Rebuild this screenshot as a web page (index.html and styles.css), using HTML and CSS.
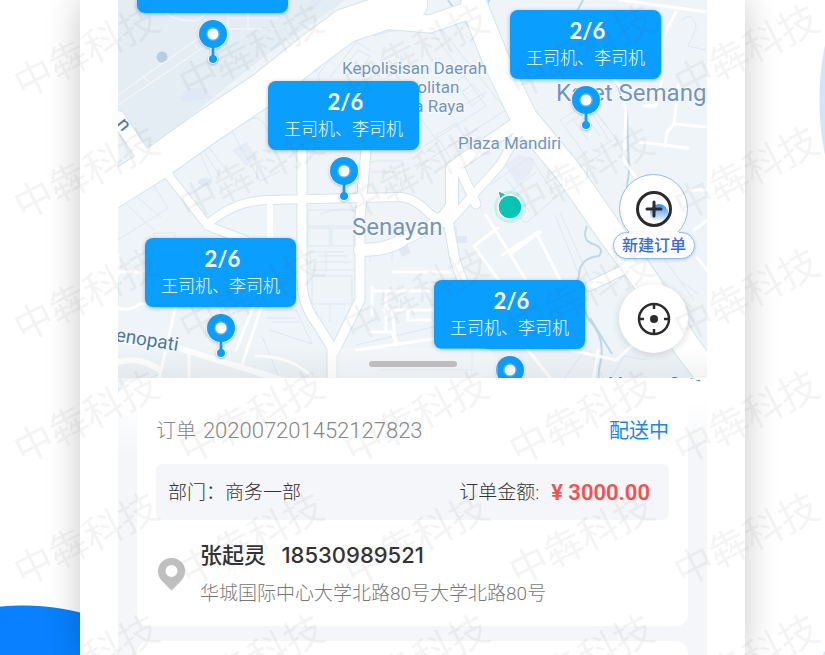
FILE: index.html
```
<!DOCTYPE html>
<html lang="zh-CN">
<head>
    <meta charset="UTF-8">
    <meta name="viewport" content="width=device-width, initial-scale=1.0">
    <title>配送订单</title>
    <link rel="stylesheet" href="styles.css">
</head>
<body>
    <main class="phone">
        <div class="screen">
            <section class="map">
                <svg class="map-bg" viewBox="118 0 589 400" preserveAspectRatio="xMidYMid slice" aria-hidden="true">
                    <rect x="118" width="589" height="400" fill="#eff4f8"/>
                    <path d="M118 0H345L260 60 148 150 118 112z" fill="#e4edf4"/>
                    <g fill="#dfe8f3">
                        <path d="M180 98l8-10h16l8 10-30 4z"/>
                        <circle cx="162" cy="57" r="5.500" fill="#b5cfe1"/>
                        <ellipse cx="205" cy="182" rx="7" ry="4"/>
                        <path d="M450 227h7v9h10v7h-17zM398 248l9-4 4 9-9 4zM306 8l6-8h10l-10 12z"/>
                        <path d="M505 165l14-10 16 4-4 14-14 12zM232 150l14-8 12 16-12 8z" fill="#e7edf6"/>
                    </g>

                    <!-- parcels and footpaths -->
                    <g class="parcels bright">
                        <path d="M118 95L200 37M118 105L207 45M142 75l7 8M192 41l6 8M165 13q10 8 30 8l12-8M228 13v16h50M248 13v16M228 18h50"/>
                    </g>
                    <g class="parcels">
                        <path d="M118 170l18-12-18-25M118 186l14-10-10-12"/>
                        <path d="M170 170l15 28 27-18-14-32zM201 146l20 32M206 143l22 30M230 128l30 53 20-10M248 120q15-8 22 18"/>
                        <path d="M118 240l50-32-14-22M126 204l28 26M137 197l24 20M153 233h22v8h-18z"/>
                        <path d="M315 72l37-42q10-6 20-6l70 6 64 80-70 45-20 14M352 30l-34 45 10 40M362 34l-32 44M374 36q20-10 60-2l52 72-68 44"/>
                        <path d="M350 60l8-10 12 6-8 12zM356 42l14 8M462 92l10-8 12 12-12 10zM458 80l18-12M466 104l20-12M408 130l14-10 16 22-14 12zM436 135l20-12 16 26-20 12z"/>
                        <path d="M278 28l18 24M284 28l16 22M340 0l-10 14-8-6"/>
                        <path d="M560 120l30-18 28 40-28 20zM566 124l24-14 20 32M572 118l16 22M582 112l18 24M592 108l16 20M596 150l20-12"/>
                        <path d="M490 185l40-28 26 40-30 26-22-18M500 200l36-28M506 178l24 34"/>
                        <path d="M308 210h46v16h-46zM308 228h22v18h-22zM332 228h22v18h-22zM310 250v20h44M318 256h30M316 262h36M312 276h40v28h-40zM330 304v18M312 252h32M326 252v20"/>
                        <path d="M320 214q25-10 42 0M370 262v-14h22v14"/>
                        <path d="M266 310h30l16 34M266 318h30M270 330l42 14M272 322h28M262 336l18 44"/>
                        <path d="M362 165l14-4h26l4 20-10 20-30-4zM366 172h34M118 282v28M272 208v30h-20"/>
                        <path d="M555 215l24 60M560 212l30 68M630 258l52 70M640 250l54 72M650 240l44 60M664 302l24 14M672 290l20 18M682 282l16 12"/>
                        <path d="M380 370h92v-22M356 345l120-28M610 380l14-24 22 4M560 384l30-40M120 392l44-20"/>
                        <path d="M682 20q12-10 14 8l-8 18 18 4M610 60l22-10M590 350l14 30"/>
                    </g>

                    <!-- water -->
                    <g class="water">
                        <path d="M583 0l-20 38 52 42 12 32 2 60-4 30M587 226q-6 14 6 18t6 12q-20 2-20 20-6 12 0 22l10 22q16 16 12 40-4 14-2 30"/>
                        <path d="M448 0q6 12 22 16 16-4 20-18M376 22l70 5M590 318l22 36"/>
                    </g>

                    <!-- streets -->
                    <g class="edge">
                        <path class="w34" d="M90 205L155 164 207 127 265 88 310 52 345 26 410 4"/>
                        <path class="w17" d="M345 17L430 24 470 10 480-10"/>
                        <path class="w26" d="M474 5L496 60 524 118 567 170 610 232 643 277 687 347 720 390"/>
                        <path class="w14" d="M118 118L142 154"/>
                        <path class="w8" d="M166 172L208 226 245 240M208 224Q235 200 270 200L400 197Q415 198 430 214L447 224 500 165 520 130"/>
                        <path class="w9" d="M302 150V280Q302 305 318 325L332 348V380M366 150L360 220V300L334 352M448 220L455 260 480 330"/>
                        <path class="w12" d="M360 250Q390 250 405 238L440 222 452 206V168L514 125"/>
                        <path class="w9" d="M458 165L476 204M590 286L640 262"/>
                    </g>
                    <g class="road">
                        <path class="w34" d="M90 205L155 164 207 127 265 88 310 52 345 26 410 4"/>
                        <path class="w17" d="M345 17L430 24 470 10 480-10"/>
                        <path class="w26" d="M474 5L496 60 524 118 567 170 610 232 643 277 687 347 720 390"/>
                        <path class="w14" d="M118 118L142 154"/>
                        <path class="w8" d="M166 172L208 226 245 240M208 224Q235 200 270 200L400 197Q415 198 430 214L447 224 500 165 520 130"/>
                        <path class="w9" d="M302 150V280Q302 305 318 325L332 348V380M366 150L360 220V300L334 352M448 220L455 260 480 330"/>
                        <path class="w12" d="M360 250Q390 250 405 238L440 222 452 206V168L514 125"/>
                        <path class="w9" d="M458 165L476 204M590 286L640 262"/>
                        <path class="w6" d="M118 340L178 348 250 370 330 395M118 362Q140 356 160 370M270 202V240"/>
                        <path class="w3" d="M118 308Q128 312 140 304H150M176 305L160 375V400M189 352V385M262 305L242 365M254 305L236 350M118 272H146M256 356Q290 356 310 375M118 255V275"/>
                        <path class="w3" d="M372 287V315M372 291H430M393 272H450M386 291V330M370 332H392L397 345M384 310H460M408 310V320H430M392 310L396 345M356 350L440 338"/>
                        <path class="w3" d="M486 215L526 280M502 255L538 232M474 246L498 228M474 246L500 282M538 236L560 280M510 254L540 232M520 340L560 390M598 350L590 400M570 350L616 360 634 344"/>
                        <path class="w3" d="M620 0L707 12M676 12L664 35 662 80 656 106 644 106M678 85L674 124M707 127L674 124 667 132 665 146M640 142L688 148M600 60L622 90 626 112 624 160 640 184M690 190H707M694 230L707 220M697 258L707 270"/>
                    </g>

                    <g class="labels">
                        <text x="342" y="74" class="s17">Kepolisisan Daerah</text>
                        <text x="363" y="93" class="s17">Metropolitan</text>
                        <text x="366" y="112" class="s17">Jakarta Raya</text>
                        <text x="458" y="149" class="s17">Plaza Mandiri</text>
                        <text x="352" y="235" class="s24">Senayan</text>
                        <text x="556" y="101" class="s24">Karet Semang</text>
                        <text x="608" y="389" class="s17 dark">Menara Satr</text>
                        <text x="115" y="341" class="s19 dark" transform="rotate(9 115 341)">enopati</text>
                        <text x="116" y="124" class="s19 dark" transform="rotate(52 116 124)">n</text>
                    </g>

                    <!-- own position -->
                    <circle cx="510" cy="207" r="16" fill="#08c6b5" opacity=".15"/>
                    <path d="M498 191l8 3-6 5z" fill="#08c6b5" stroke="#fff"/>
                    <circle cx="510" cy="207" r="12" fill="#08c6b5" stroke="#fff" stroke-width="1.500"/>
                </svg>

                <svg class="symbols" aria-hidden="true">
                    <symbol id="pin" viewBox="0 0 32 46">
                        <path d="M16 30v10" stroke="#fff" stroke-width="5"/>
                        <circle cx="16" cy="41" r="5" fill="#fff"/>
                        <circle cx="16" cy="16" r="15" fill="#fff" opacity=".7"/>
                        <circle cx="16" cy="16" r="14" fill="#0a9eff"/>
                        <path d="M16 28v12" stroke="#0a9eff" stroke-width="3"/>
                        <circle cx="16" cy="41" r="4" fill="#0a9eff"/>
                        <circle cx="16" cy="16" r="7" fill="#5fc2ff" opacity=".6"/>
                        <circle cx="16" cy="16" r="5.500" fill="#fff"/>
                    </symbol>
                </svg>

                <button class="marker marker-a" type="button">
                    <span class="bubble"><b>2/6</b><span>王司机、李司机</span></span>
                    <svg class="pin"><use href="#pin"/></svg>
                </button>
                <button class="marker marker-b" type="button">
                    <span class="bubble"><b>2/6</b><span>王司机、李司机</span></span>
                    <svg class="pin"><use href="#pin"/></svg>
                </button>
                <button class="marker marker-c" type="button">
                    <span class="bubble"><b>2/6</b><span>王司机、李司机</span></span>
                    <svg class="pin"><use href="#pin"/></svg>
                </button>
                <button class="marker marker-d" type="button">
                    <span class="bubble"><b>2/6</b><span>王司机、李司机</span></span>
                    <svg class="pin"><use href="#pin"/></svg>
                </button>
                <button class="marker marker-e" type="button">
                    <span class="bubble"><b>2/6</b><span>王司机、李司机</span></span>
                    <svg class="pin"><use href="#pin"/></svg>
                </button>

                <div class="map-tools">
                    <button class="new-order" type="button">
                        <span class="tool-circle">
                            <svg width="40" height="40" viewBox="0 0 40 40" fill="none" aria-hidden="true">
                                <defs>
                                    <linearGradient id="glow" x1="0" y1="0" x2="0" y2="1">
                                        <stop offset="0" stop-color="#2f86f5"/>
                                        <stop offset="1" stop-color="#fff"/>
                                    </linearGradient>
                                </defs>
                                <circle cx="25" cy="24" r="9" fill="url(#glow)"/>
                                <circle cx="20" cy="20" r="16.500" stroke="#2b2b2e" stroke-width="3"/>
                                <path d="M20 13v14M13 20h14" stroke="#2b2b2e" stroke-width="3" stroke-linecap="round"/>
                            </svg>
                        </span>
                        <span class="tool-label">新建订单</span>
                    </button>
                    <button class="locate tool-circle" type="button" aria-label="定位">
                        <svg width="40" height="40" viewBox="0 0 40 40" fill="none" stroke="#2b2b2e" stroke-width="2.500" aria-hidden="true">
                            <circle cx="20" cy="20" r="15"/>
                            <path d="M20 5v5M20 30v5M5 20h5M30 20h5"/>
                            <circle cx="20" cy="20" r="4" fill="#2b2b2e" stroke="none"/>
                        </svg>
                    </button>
                </div>

                <div class="grip"><span></span></div>
            </section>

            <section class="sheet">
                <article class="order">
                    <header class="order-head">
                        <h2>订单 <span>202007201452127823</span></h2>
                        <span class="state">配送中</span>
                    </header>
                    <div class="summary">
                        <span>部门：商务一部</span>
                        <span class="amount">订单金额: <b>¥ 3000.00</b></span>
                    </div>
                    <div class="receiver">
                        <svg width="27" height="33" viewBox="0 0 27 33" aria-hidden="true">
                            <path d="M13.500 0A13.300 13.300 0 0 0 0 13.300C0 18 2 21 5 24l8.500 8.500L22 24c3-3 5-6 5-10.700A13.300 13.300 0 0 0 13.500 0zm0 7a6 6 0 1 1 0 12 6 6 0 0 1 0-12z" fill="#bfbfbf"/>
                        </svg>
                        <div>
                            <p class="contact">张起灵 <span>18530989521</span></p>
                            <p class="address">华城国际中心大学北路80号大学北路80号</p>
                        </div>
                    </div>
                </article>
                <article class="order order-next"></article>
            </section>
        </div>
    </main>

    <svg class="watermark" aria-hidden="true">
        <defs>
            <pattern id="wm" width="165" height="122" patternUnits="userSpaceOnUse">
                <text x="23" y="99" transform="rotate(-27 23 99)">中犇科技</text>
            </pattern>
        </defs>
        <rect width="100%" height="100%" fill="url(#wm)"/>
    </svg>
</body>
</html>
```

FILE: styles.css
```
* {
    box-sizing: border-box;
}
body {
    margin: 0;
    min-height: 100vh;
    display: flex;
    position: relative;
    padding: 0 80px;
    /* circles: bottom left, right edge, bottom right */
    background:
        radial-gradient(circle at 23px 841px, #0880ff 235px, transparent 236px),
        radial-gradient(circle at calc(100% + 274px) 100px, #cfe6ff 279px, transparent 280px),
        radial-gradient(circle at calc(100% + 13px) 666px, #cfe6ff 19px, transparent 20px),
        #fff;
    color: #333;
    font-family: Roboto, "Noto Sans CJK SC", sans-serif;
}
h2, p {
    margin: 0;
    font-weight: 400;
}
button {
    border: none;
    padding: 0;
    background: none;
    font-family: inherit;
    cursor: pointer;
}

/* phone */
.phone {
    flex: 1;
    min-width: 0;
    display: flex;
    padding: 0 38px;
    background: #fff;
    box-shadow: 0 0 32px rgba(0, 0, 0, 0.22);
    clip-path: inset(0 -60px);
}
.screen {
    flex: 1;
    min-width: 0;
    display: flex;
    flex-direction: column;
}

/* map */
.map {
    position: relative;
    flex: none;
    height: 400px;
    overflow: hidden;
}
.map-bg {
    display: block;
    width: 100%;
    height: 100%;
}
.symbols {
    position: absolute;
    width: 0;
    height: 0;
}
.parcels {
    fill: none;
    stroke: #dce9ef;
    stroke-width: 1;
}
.parcels.bright {
    stroke: #f6fafc;
}
.water {
    fill: none;
    stroke: #c2d7e4;
    stroke-width: 2;
}
.edge, .road {
    fill: none;
    stroke-linejoin: round;
    stroke-linecap: round;
}
.road {
    stroke: #fff;
}
.edge {
    stroke: #d5e5ec;
}
.road .w34 { stroke-width: 34px; }
.road .w26 { stroke-width: 26px; }
.road .w17 { stroke-width: 17px; }
.road .w14 { stroke-width: 14px; }
.road .w12 { stroke-width: 12px; }
.road .w9 { stroke-width: 9px; }
.road .w8 { stroke-width: 8px; }
.road .w6 { stroke-width: 6px; }
.road .w3 { stroke-width: 3px; }
.edge .w34 { stroke-width: 36px; }
.edge .w26 { stroke-width: 28px; }
.edge .w17 { stroke-width: 19px; }
.edge .w14 { stroke-width: 16px; }
.edge .w12 { stroke-width: 14px; }
.edge .w9 { stroke-width: 11px; }
.edge .w8 { stroke-width: 10px; }
.labels {
    fill: #7395bd;
    stroke: #f7fafc;
    stroke-width: 2px;
    paint-order: stroke;
    font-family: Roboto, sans-serif;
}
.labels .s17 {
    font-size: 17px;
}
.labels .s19 { font-size: 19px; }
.labels .s24 { font-size: 24px; }
.labels .dark { fill: #4a76a9; }

/* driver markers */
.marker {
    position: absolute;
    display: flex;
    flex-direction: column;
    align-items: center;
    gap: 5px;
}
.marker-a { left: 19px; top: -56px; }
.marker-b { left: 392px; top: 10px; }
.marker-c { left: 150px; top: 81px; }
.marker-d { left: 27px; top: 238px; }
.marker-e { left: 316px; top: 280px; }
.bubble {
    display: flex;
    flex-direction: column;
    align-items: center;
    padding: 8px 16px 6px;
    border-radius: 8px;
    background: #0a9eff;
    box-shadow: 0 1px 4px rgba(0, 60, 120, 0.35);
    color: #fff;
    font-size: 17px;
    font-weight: 300;
    line-height: 29px;
    white-space: nowrap;
}
.bubble b {
    padding-left: 4px;
    font-family: Lato, sans-serif;
    font-size: 22px;
    font-weight: 700;
    line-height: 26px;
}
.pin {
    width: 32px;
    height: 46px;
    filter: drop-shadow(0 1px 1px rgba(0, 40, 80, 0.3));
}

/* map buttons */
.map-tools {
    position: absolute;
    right: 12px;
    top: 174px;
    display: flex;
    flex-direction: column;
    align-items: center;
    gap: 25px;
}
.tool-circle {
    display: flex;
    align-items: center;
    justify-content: center;
    width: 69px;
    height: 69px;
    border-radius: 50%;
    background: #fff;
}
.new-order {
    display: flex;
    flex-direction: column;
    align-items: center;
}
.new-order .tool-circle {
    border: 1px solid #8fbcf3;
}
.tool-label {
    position: relative;
    margin-top: -11px;
    padding: 0 8px;
    border: 1px solid #8fbcf3;
    border-radius: 14px;
    background: #fff;
    box-shadow: 0 1px 3px rgba(50, 110, 200, 0.3);
    color: #3a6bd0;
    font-size: 16px;
    font-weight: 500;
    line-height: 25px;
}
/* opens the pill's top edge under the circle */
.tool-label::before {
    content: "";
    position: absolute;
    left: 15px;
    right: 15px;
    top: -1px;
    height: 2px;
    background: #fff;
}
.locate {
    box-shadow: 0 2px 8px rgba(0, 0, 0, 0.14);
}
.grip {
    position: absolute;
    left: 0;
    right: 0;
    bottom: 22px;
    height: 30px;
    display: flex;
    justify-content: center;
    background: linear-gradient(rgba(90, 100, 110, 0), rgba(90, 100, 110, 0.08));
}
.grip span {
    width: 170px;
    padding: 13px 41px 11px;
    border-radius: 16px 16px 0 0;
    background: rgba(255, 255, 255, 0.25);
}
.grip span::before {
    content: "";
    display: block;
    height: 6px;
    border-radius: 3px;
    background: #bdbdbd;
}

/* order sheet */
.sheet {
    position: relative;
    flex: 1;
    display: flex;
    flex-direction: column;
    gap: 15px;
    margin-top: -22px;
    padding: 14px 19px 0;
    border-radius: 20px 20px 0 0;
    background: linear-gradient(#fff 20px, #f4f6f9 76px);
}
.order {
    padding: 21px 19px 14px;
    border-radius: 12px;
    background: #fff;
}
.order-next {
    flex: 1;
    padding: 0;
    min-height: 15px;
    border-radius: 12px 12px 0 0;
}
.order-head {
    display: flex;
    align-items: center;
    justify-content: space-between;
    margin-bottom: 15px;
    line-height: 36px;
}
.order-head h2 {
    color: #888;
    font-size: 20px;
    font-weight: 300;
}
.order-head h2 span {
    margin-left: 2px;
    font-size: 22px;
}
.state {
    color: #1a86e8;
    font-size: 20px;
}
.summary {
    display: flex;
    align-items: center;
    justify-content: space-between;
    padding: 1px 19px 0 12px;
    border-radius: 6px;
    background: #f5f6f9;
    font-size: 19px;
    font-weight: 300;
    line-height: 55px;
}
.amount {
    display: flex;
    gap: 12px;
}
.amount b {
    color: #f5504f;
    font-size: 22px;
    font-weight: 600;
}
.receiver {
    display: flex;
    align-items: center;
    gap: 15px;
    padding: 16px 2px 0;
}
.contact {
    font-size: 22px;
    font-weight: 500;
    line-height: 38px;
}
.contact span {
    margin-left: 10px;
    font-family: Inter, sans-serif;
}
.address {
    color: #777;
    font-size: 19px;
    font-weight: 300;
    line-height: 37px;
}

.watermark {
    position: absolute;
    inset: 0;
    width: 100%;
    height: 100%;
    pointer-events: none;
    font-family: "Noto Sans CJK SC", sans-serif;
    font-size: 39px;
    font-weight: 400;
    fill: #555;
    opacity: 0.06;
}
```
